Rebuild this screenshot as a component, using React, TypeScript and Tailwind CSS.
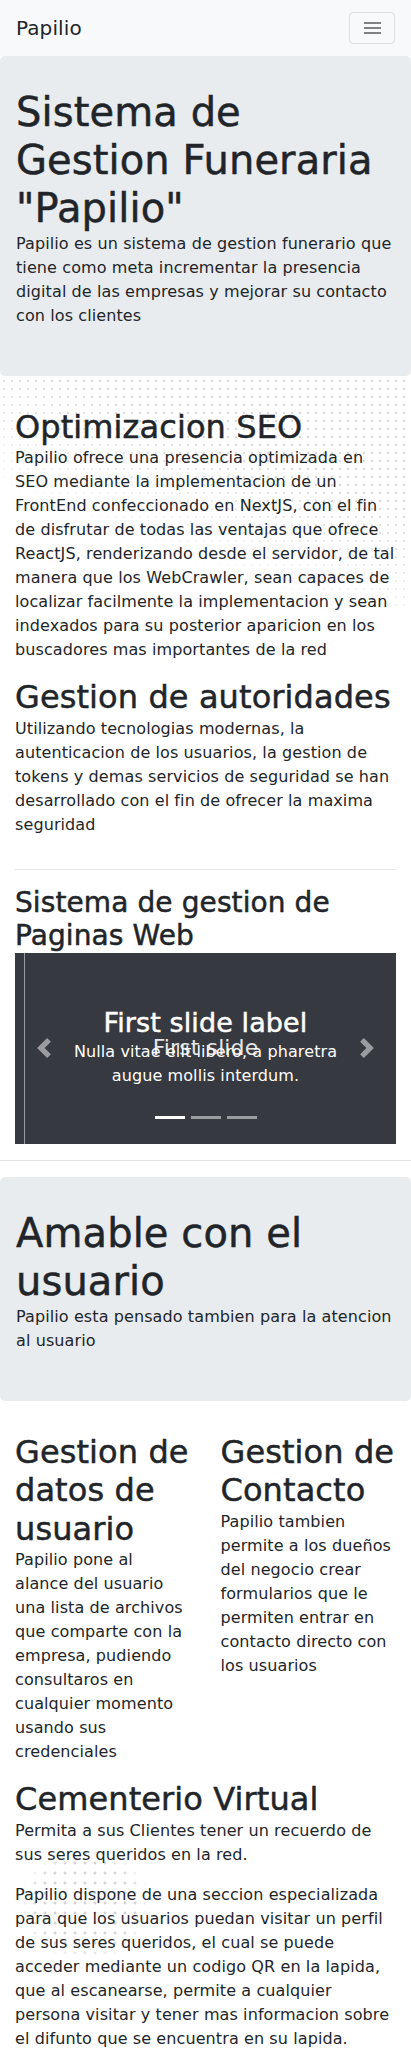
import React from 'react';

const slides = [0, 1, 2];

const heading = '[-webkit-text-stroke:0.5px] font-medium leading-[1.2]';

function Navbar() {
  return (
    <nav className="h-14 bg-[#f8f9fa] flex items-center justify-between px-4">
      <span className="text-[20px] leading-[30px] text-[#212529]">Papilio</span>
      <button className="w-[46px] h-8 border border-black/10 rounded flex items-center justify-center">
        <span className="flex flex-col gap-[3px]">
          <span className="block w-[17px] h-[2px] bg-[#7f8081]" />
          <span className="block w-[17px] h-[2px] bg-[#7f8081]" />
          <span className="block w-[17px] h-[2px] bg-[#7f8081]" />
        </span>
      </button>
    </nav>
  );
}

function Jumbotron({ title, text }: { title: string; text: string }) {
  return (
    <div className="bg-[#e9ecef] rounded-[5px] px-4 py-8 mb-8">
      <h1 className={`text-[40px] ${heading}`}>{title}</h1>
      <p className="mb-4">{text}</p>
    </div>
  );
}

function Carousel() {
  return (
    <div className="relative h-[191px] bg-[#373940] overflow-hidden">
      <div className="absolute inset-0 flex items-center justify-center text-[22px] text-[#e6e6e6]">First slide</div>
      <div className="absolute left-[9px] top-0 bottom-0 w-px bg-[#9a9b9e]" />
      <div className="absolute inset-y-0 left-0 w-[15%] flex items-center justify-center opacity-50">
        <svg width="20" height="20" viewBox="0 0 8 8" fill="#fff">
          <path d="M5.25 0l-4 4 4 4 1.5-1.5L4.25 4l2.5-2.5L5.25 0z" />
        </svg>
      </div>
      <div className="absolute inset-y-0 right-0 w-[15%] flex items-center justify-center opacity-50">
        <svg width="20" height="20" viewBox="0 0 8 8" fill="#fff">
          <path d="M2.75 0l-1.5 1.5L3.75 4l-2.5 2.5L2.75 8l4-4-4-4z" />
        </svg>
      </div>
      <div className="absolute left-[15%] right-[15%] bottom-5 py-5 text-center text-white">
        <h3 className={`text-[27px] leading-[34px] [-webkit-text-stroke:0.5px] font-medium`}>First slide label</h3>
        <p className="mb-4">Nulla vitae elit libero, a pharetra augue mollis interdum.</p>
      </div>
      <div className="absolute left-0 right-0 bottom-[25px] flex justify-center gap-[6px]">
        {slides.map((i) => (
          <span key={i} className={i === 0 ? 'block w-[30px] h-[3px] bg-white' : 'block w-[30px] h-[3px] bg-white/50'} />
        ))}
      </div>
    </div>
  );
}

export default function App() {
  return (
    <div className="min-h-screen bg-white text-[#212529] text-base leading-6 tracking-[0.1px] font-['DejaVu_Sans',sans-serif]">
      <Navbar />
      <Jumbotron
        title={'Sistema de Gestion Funeraria "Papilio"'}
        text="Papilio es un sistema de gestion funerario que tiene como meta incrementar la presencia digital de las empresas y mejorar su contacto con los clientes"
      />

      <section className="relative px-[15px]">
        <div className="absolute left-0 right-0 -top-[31px] h-[230px] bg-[radial-gradient(#d9d9d9_1px,transparent_1.6px)] bg-[length:8px_8px] [mask-image:linear-gradient(201deg,black_35%,transparent_72%)]" />
        <div className="relative">
          <h2 className={`text-[32px] ${heading}`}>Optimizacion SEO</h2>
          <p className="mb-4">
            Papilio ofrece una presencia optimizada en SEO mediante la implementacion de un FrontEnd confeccionado en NextJS, con el fin de disfrutar de todas las ventajas que ofrece ReactJS, renderizando desde el servidor, de tal manera que los WebCrawler, sean capaces de localizar facilmente la implementacion y sean indexados para su posterior aparicion en los buscadores mas importantes de la red
          </p>
          <h2 className={`text-[32px] ${heading}`}>Gestion de autoridades</h2>
          <p>
            Utilizando tecnologias modernas, la autenticacion de los usuarios, la gestion de tokens y demas servicios de seguridad se han desarrollado con el fin de ofrecer la maxima seguridad
          </p>
          <hr className="mt-8 mb-4 border-black/10" />
          <h3 className={`text-[28px] ${heading}`}>Sistema de gestion de Paginas Web</h3>
          <Carousel />
        </div>
      </section>

      <hr className="my-4 border-black/10" />

      <Jumbotron title="Amable con el usuario" text="Papilio esta pensado tambien para la atencion al usuario" />

      <section className="px-[15px]">
        <div className="grid grid-cols-2 gap-[30px]">
          <div>
            <h2 className={`text-[32px] ${heading}`}>Gestion de datos de usuario</h2>
            <p className="mb-4">
              Papilio pone al alance del usuario una lista de archivos que comparte con la empresa, pudiendo consultaros en cualquier momento usando sus credenciales
            </p>
          </div>
          <div>
            <h2 className={`text-[32px] ${heading}`}>Gestion de Contacto</h2>
            <p className="mb-4">
              Papilio tambien permite a los dueños del negocio crear formularios que le permiten entrar en contacto directo con los usuarios
            </p>
          </div>
        </div>
        <div className="relative">
          <div className="absolute left-[5px] top-[68px] w-[130px] h-[112px] bg-[radial-gradient(#d4d4d4_1.2px,transparent_1.8px)] bg-[length:10px_10px] [mask-image:radial-gradient(ellipse_at_center,black_55%,transparent_72%)]" />
          <div className="relative">
            <h2 className={`text-[32px] ${heading}`}>Cementerio Virtual</h2>
            <p className="mb-4">Permita a sus Clientes tener un recuerdo de sus seres queridos en la red.</p>
            <p className="mb-4">
              Papilio dispone de una seccion especializada para que los usuarios puedan visitar un perfil de sus seres queridos, el cual se puede acceder mediante un codigo QR en la lapida, que al escanearse, permite a cualquier persona visitar y tener mas informacion sobre el difunto que se encuentra en su lapida.
            </p>
          </div>
        </div>
      </section>
    </div>
  );
}
